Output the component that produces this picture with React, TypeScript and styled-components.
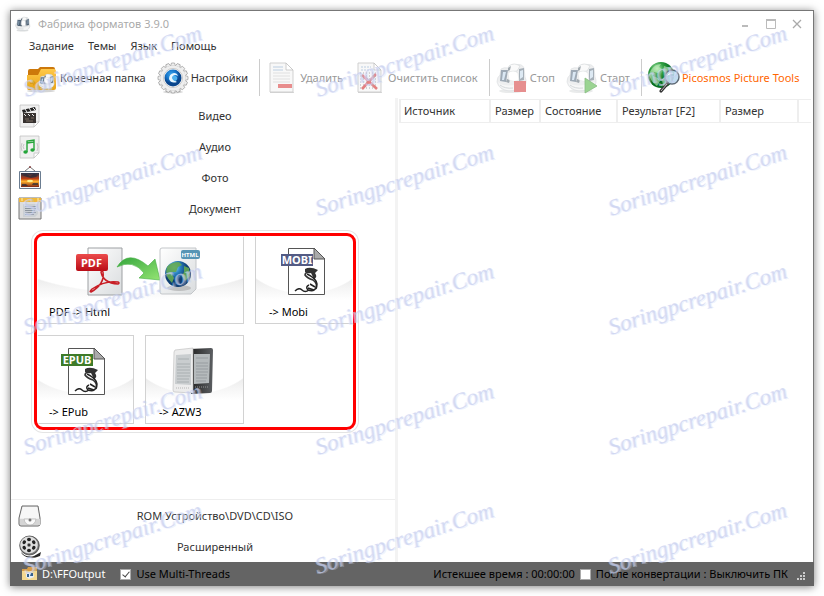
import React from "react";
import styled, { createGlobalStyle } from "styled-components";

const GlobalStyle = createGlobalStyle`
  *, *::before, *::after { box-sizing: border-box; }
  body {
    margin: 0;
    background: #fff;
    color: #333;
    font: 11px/16px "Noto Sans", "Open Sans", sans-serif;
  }
  button { font: inherit; color: inherit; background: none; border: 0; padding: 0; }
  svg { display: block; flex: none; }
`;

const Page = styled.div`
  position: relative;
  min-height: 100vh;
  padding: 10px;
  display: flex;
  overflow: hidden;
`;

const AppWindow = styled.div`
  flex: 1;
  min-width: 0;
  display: flex;
  flex-direction: column;
  background: #fff;
  border: 1px solid #777;
  border-bottom: 0;
  box-shadow: 0 1px 8px rgba(0, 0, 0, 0.5);
`;

const TitleBar = styled.header`
  display: flex;
  align-items: center;
  height: 26px;
  padding: 0 9px 0 4px;
`;

const Title = styled.h1`
  flex: 1;
  margin: 0 0 0 7px;
  font-size: 11px;
  font-weight: 400;
  color: #aaa;
`;

const WindowButtons = styled.div`
  display: flex;
  margin-right: -6px;
`;

const WindowButton = styled.button`
  display: grid;
  place-items: center;
  width: 26px;
  height: 24px;
`;

const MenuBar = styled.nav`
  display: flex;
  gap: 14px;
  height: 18px;
  align-items: center;
  padding-left: 18px;
`;

const Toolbar = styled.div`
  display: flex;
  align-items: center;
  height: 43px;
  padding: 2px 0 0 15px;
`;

const Tool = styled.button<{ $tone?: string }>`
  display: flex;
  align-items: center;
  gap: 2px;
  height: 36px;
  padding-right: 11px;
  white-space: nowrap;
  color: ${(p) => p.$tone || "#333"};
  &:disabled { color: #999; }
  &:disabled svg { opacity: 0.6; }
`;

const Separator = styled.span`
  width: 1px;
  height: 37px;
  margin-right: 6px;
  background: #ccc;
`;

const Main = styled.main`
  flex: 1;
  display: flex;
  min-height: 0;
`;

const Sidebar = styled.aside`
  flex: 0 0 384px;
  display: flex;
  flex-direction: column;
  padding-top: 2px;
`;

const Splitter = styled.div`
  flex: 0 0 3px;
  background: #f3f3f3;
`;

const Category = styled.button`
  display: flex;
  align-items: center;
  width: 100%;
  height: 31px;
  padding: 0 15px 0 7px;
  svg { width: 24px; height: 24px; }
  span { flex: 1; text-align: center; padding-left: 8px; }
`;

const Formats = styled.div`
  position: relative;
  display: grid;
  grid-template-columns: repeat(3, 99px);
  gap: 11px;
  margin: 11px 0 0 24px;
  align-self: flex-start;
  &::after {
    content: "";
    position: absolute;
    inset: -2px -2px -6px -1px;
    border: 3px solid #f00;
    border-radius: 9px;
    box-shadow: 0 0 0 2px #fff, 0 0 0 3px #e4e4e4, inset 0 0 0 1px rgba(255, 255, 255, 0.8);
    pointer-events: none;
  }
`;

const FormatCard = styled.button<{ $wide?: boolean }>`
  grid-column: ${(p) => (p.$wide ? "span 2" : "span 1")};
  height: 89px;
  display: flex;
  flex-direction: column;
  align-items: center;
  padding: 11px 4px 3px 0;
  border: 1px solid #d2d2d2;
  color: #000;
  background:
    radial-gradient(ellipse 75% 58px at 50% 0, #fff 98%, transparent 100%),
    linear-gradient(#fff 40%, #e6e6e6 42%, #f5f5f5 60%, #fff 74%);
  span { align-self: flex-start; margin: auto 0 0 13px; white-space: pre; }
`;

const SidebarFoot = styled.div`
  margin-top: auto;
  border-top: 1px solid #eee;
`;

const Queue = styled.section`
  flex: 1;
  min-width: 0;
  padding: 1px 2px 0 1px;
`;

const QueueTable = styled.table`
  width: 100%;
  table-layout: fixed;
  border-collapse: collapse;
  th {
    height: 23px;
    padding: 0 0 0 4px;
    border: 2px solid #eee;
    border-width: 1px 0 1px 2px;
    font-weight: 400;
    text-align: left;
    white-space: nowrap;
  }
  th:first-child { padding-left: 3px; }
`;

const StatusBar = styled.footer`
  display: flex;
  align-items: center;
  height: 24px;
  padding: 0 8px 0 12px;
  margin: 0 -1px;
  background: #646464;
  color: #000;
  white-space: nowrap;
`;

const OutputButton = styled.button`
  display: flex;
  align-items: center;
  gap: 4px;
  color: #fff;
`;

const CheckLabel = styled.label<{ $lead: number }>`
  display: flex;
  align-items: center;
  gap: 5px;
  margin-left: ${(p) => p.$lead}px;
`;

const Check = styled.input`
  appearance: none;
  display: grid;
  place-items: center;
  width: 11px;
  height: 11px;
  margin: 0;
  background: #fff;
  border: 1px solid #aaa;
  &:checked::after {
    content: "";
    width: 4px;
    height: 7px;
    margin-top: -2px;
    border: solid #444;
    border-width: 0 1px 1px 0;
    transform: rotate(40deg);
  }
`;

const Elapsed = styled.span`
  margin-left: auto;
`;

const Watermarks = styled.div`
  position: absolute;
  inset: 0 -53px 0 0;
  display: grid;
  grid-template-columns: repeat(3, 1fr);
  grid-template-rows: repeat(5, 1fr);
  pointer-events: none;
  user-select: none;
`;

const Watermark = styled.span`
  padding: 78px 0 0 26px;
  font: italic 400 23px/24px "Liberation Serif", serif;
  color: rgba(190, 196, 232, 0.5);
  text-shadow: 1px 1px 0 rgba(200, 212, 248, 0.3), -1px 0 0 rgba(222, 233, 255, 0.5);
  transform: rotate(-18deg);
  transform-origin: 26px 96px;
`;

const Machine = () => (
  <g>
    <ellipse cx="15" cy="29" rx="12" ry="2" fill="#c4c8ca" opacity=".6" />
    <path d="M1 20Q1 15 4 13L5 7Q8 5 12 6Q14 2 19 3Q26 1 28 6L29 15Q32 21 27 26Q22 29 13 29Q3 28 1 20Z" fill="#e3e5e7" stroke="#c3c8cb" strokeWidth=".6" />
    <path d="M2 20Q9 27 29 20Q28 26 22 28L11 28Q4 26 2 20Z" fill="#f4f5f5" />
    <path d="M5 8L12 8L10 20L4 19Z" fill="#5f7387" />
    <path d="M7 10L10 10L8 18L6 18Z" fill="#c2daee" />
    <path d="M23 7L28 6L28 18L23 19Z" fill="#6c7c8b" />
    <path d="M24 9L27 8L27 15L24 17Z" fill="#c7dcec" />
    <path d="M13 4Q18 0 24 4L21 9L13 10Z" fill="#f8f8f8" stroke="#b4babd" strokeWidth=".6" />
    <path d="M12 6L15 4L14 8L12 9ZM11 17L14 18L13 21L10 20Z" fill="#65727d" />
    <path d="M12 11Q17 7 22 11L23 18Q18 21 13 18Z" fill="#fff" stroke="#c5cacd" strokeWidth=".5" />
    <path d="M4 23Q9 27 17 26" stroke="#b9bfc3" fill="none" />
  </g>
);

const AppIcon = () => (
  <svg width="16" height="16" viewBox="0 0 32 32"><Machine /><path d="M7 9L13 8L12 20L6 20ZM21 9L27 8L27 18L21 19Z" fill="#304458" fillOpacity=".55" /></svg>
);

const FolderIcon = () => (
  <svg width="32" height="32" viewBox="0 0 32 32">
    <defs><linearGradient id="folder" x2="0" y2="1"><stop stopColor="#ffc94a" /><stop offset="1" stopColor="#e8a318" /></linearGradient></defs>
    <ellipse cx="15" cy="29" rx="14" ry="1.5" fill="#aaa" opacity=".5" />
    <path d="M2 9Q2 7 4 7H12L14 5H27Q29 5 29 7V26H2Z" fill="#cc780b" />
    <path d="M1 13H12L15 7H28Q30 7 30 9V26Q30 28 28 28H3Q1 28 1 26Z" fill="url(#folder)" />
    <path d="M4 20H7V18L10 21L7 24V22H4Z" fill="#cf930f" opacity=".6" />
    <g transform="translate(12 11) scale(.54)"><Machine /></g>
  </svg>
);

const teeth = Array.from({ length: 16 }, (_, i) => i * 22.5);
const GearIcon = () => (
  <svg width="32" height="32" viewBox="0 0 32 32">
    <defs><radialGradient id="blue" cx=".4" cy=".3"><stop stopColor="#3ca4e8" /><stop offset=".6" stopColor="#1676cb" /><stop offset="1" stopColor="#0a468d" /></radialGradient></defs>
    <ellipse cx="16" cy="30" rx="10" ry="1.5" fill="#bbb" opacity=".6" />
    {teeth.map((a) => <path key={a} d="M13.500 4L14.500 1H17.500L18.500 4Z" fill="#eee" stroke="#999" strokeWidth=".7" transform={`rotate(${a} 16 16)`} />)}
    <circle cx="16" cy="16" r="12.600" fill="#eee" />
    <circle cx="16" cy="16" r="9.500" fill="#fff" stroke="#aaa" strokeWidth=".6" />
    <circle cx="16" cy="16" r="8.500" fill="url(#blue)" />
    <path d="M20 20Q14 22 12 17Q12 12 17 11Q20 11 21 14Q18 12 16 14Q14 17 20 20Z" fill="#e7f7ff" />
    <path d="M15 15Q17 12 20 15Q21 18 18 19Q15 18 15 15Z" fill="#4fb2ee" />
  </svg>
);

const SheetBase = () => (
  <g>
    <path d="M4 30H28V31H4Z" fill="#bbb" />
    <path d="M4 1H20L27 8V30H4Z" fill="#f5f5f5" stroke="#aaa" strokeWidth=".9" />
    <path d="M20 1V8H27Z" fill="#fff" stroke="#999" strokeWidth=".8" />
  </g>
);
const RemoveIcon = () => (
  <svg width="32" height="32" viewBox="0 0 32 32"><SheetBase />
    <path d="M7 5H17M7 8H17" stroke="#91aece" /><path d="M7 11H24M7 14H24M7 17H24M7 20H24" stroke="#ccc" />
    <path d="M12 22H26V26H12Z" fill="#d94242" />
  </svg>
);
const ClearIcon = () => (
  <svg width="32" height="32" viewBox="0 0 32 32"><SheetBase />
    <path d="M7 5H17M7 8H17" stroke="#91aece" strokeDasharray="2 1" /><path d="M6 11H24M6 14H24M6 17H24M6 20H24M6 23H24M6 26H24" stroke="#777" strokeDasharray="1 2" />
    <path d="M8 13L23 27M22 12L8 27" stroke="#cf2f2f" strokeWidth="2.6" />
  </svg>
);
const StopIcon = () => (
  <svg width="32" height="32" viewBox="0 0 32 32"><Machine /><path d="M18 19H30V30H18Z" fill="#d74545" /></svg>
);
const StartIcon = () => (
  <svg width="32" height="32" viewBox="0 0 32 32"><Machine /><path d="M19 16L31 24L19 31Z" fill="#59b94b" stroke="#3b9231" strokeWidth=".8" /></svg>
);
const GlobeIcon = () => (
  <svg width="32" height="32" viewBox="0 0 32 32">
    <defs><radialGradient id="green" cx=".35" cy=".25"><stop stopColor="#b8edb5" /><stop offset=".5" stopColor="#32a044" /><stop offset="1" stopColor="#076f22" /></radialGradient></defs>
    <circle cx="13" cy="13" r="13" fill="url(#green)" />
    <path d="M3 8Q7 2 13 2L11 5L14 7L10 11L6 10L5 14L10 16L12 19L9 24Q2 19 1 12ZM16 4L22 6L24 11L19 12L15 9ZM14 17L20 14L24 16L20 23L15 24Z" fill="#c4edbe" opacity=".6" />
    <path d="M20 21L13 29" stroke="#333" strokeWidth="3.2" strokeLinecap="round" /><path d="M19 22L13 29" stroke="#bbb" strokeWidth="1" />
    <circle cx="24" cy="15" r="7" fill="#b8d7ed" fillOpacity=".88" stroke="#5d6975" strokeWidth="1.4" />
    <path d="M19 14Q21 9 26 11Q22 12 19 14Z" fill="#fff" />
  </svg>
);

const Page24 = () => <path d="M2 1H21V18L16 23H2Z M21 18H16V23" fill="#f0f0f0" stroke="#c2c2c2" strokeWidth=".8" />;
const VideoIcon = () => (
  <svg viewBox="0 0 24 24"><Page24 /><path d="M5 9H18V19H5Z" fill="#373230" /><path d="M4 6L17 3L18 6L5 9Z" fill="#222" />
    <path d="M7 5L9 8M11 4L13 7M15 4L17 6M6 10L8 12M10 10L12 12M14 10L16 12" stroke="#eee" strokeWidth="1" /><path d="M7 15H11M13 14H16M8 17H15" stroke="#8b7b6e" strokeWidth=".8" /></svg>
);
const AudioIcon = () => (
  <svg viewBox="0 0 24 24"><Page24 /><path d="M9 17V6L16 5V15M9 8L16 7" fill="none" stroke="#25a53a" strokeWidth="1.400" /><ellipse cx="7.500" cy="17" rx="2.2" ry="1.8" fill="#25a53a" /><ellipse cx="14.500" cy="15" rx="2.2" ry="1.8" fill="#25a53a" /><path d="M4 8Q2 12 4 16M19 8Q21 12 19 16M6 9Q4 12 6 14" stroke="#bbb" fill="none" strokeWidth=".8" /></svg>
);
const PhotoIcon = () => (
  <svg viewBox="0 0 24 24">
    <defs><linearGradient id="sunset" x2="0" y2="1"><stop stopColor="#26334b" /><stop offset=".4" stopColor="#ba3e16" /><stop offset=".6" stopColor="#ffb22c" /><stop offset="1" stopColor="#7e2414" /></linearGradient></defs>
    <path d="M7 5L12 1L17 5" fill="none" stroke="#555" strokeWidth=".8" /><circle cx="12" cy="1" r="1" fill="#844" />
    <path d="M1.500 5.500H22.500V22.500H1.500Z" fill="#f5f8fb" stroke="#6b7d91" /><path d="M3 7H21V21H3Z" fill="url(#sunset)" />
    <path d="M4 9L8 8L12 10L16 8L20 9L18 11L13 12L9 11ZM4 18H8L10 20H4ZM15 17H20V19H14Z" fill="#222a3b" opacity=".7" /><ellipse cx="12" cy="15" rx="3" ry="1.200" fill="#fff08a" />
  </svg>
);
const DocumentIcon = () => (
  <svg viewBox="0 0 24 24"><path d="M1 1H23V22H1Z" fill="#ddd" stroke="#777" /><path d="M1 1H23V5H1Z" fill="#f0b83c" /><path d="M4 1V4M20 1V4" stroke="#fff1ae" /><path d="M5 7H20V17L17 20H5Z" fill="#ccd0d4" /><path d="M7 9.500H18M7 11.500H18M7 13.500H17M7 15.500H18M7 17.500H16" stroke="#8d96a0" strokeWidth="1" /></svg>
);
const DriveIcon = () => (
  <svg viewBox="0 0 24 24"><path d="M4 2H20L22 14V20Q22 22 20 22H3Q1 22 1 20V14Z" fill="#eee" stroke="#666" /><path d="M5 3H19L21 14H2Z" fill="#f7f7f7" /><path d="M2 15H22V21H2Z" fill="#d5d5d5" /><path d="M6 15Q7 21 12 21Q17 21 18 15Z" fill="#fafafa" stroke="#aaa" strokeWidth=".6" /><circle cx="12" cy="16" r="1.5" fill="#777" /></svg>
);
const ReelIcon = () => (
  <svg viewBox="0 0 24 24"><path d="M3 17Q8 23 16 21L23 17L22 21Q11 26 4 19Z" fill="#282828" /><ellipse cx="11.500" cy="10.500" rx="9.800" ry="9.500" fill="#777" stroke="#333" strokeWidth=".7" /><ellipse cx="11" cy="10" rx="8.800" ry="8.400" fill="#ddd" />
    {[0, 60, 120, 180, 240, 300].map((a) => <ellipse key={a} cx="11" cy="4.500" rx="2" ry="1.700" fill="#222" transform={`rotate(${a} 11 10)`} />)}<circle cx="11" cy="10" r="2" fill="#333" stroke="#eee" strokeWidth=".6" /></svg>
);

const ArtText = styled.text`
  font: 700 11px "Noto Sans", sans-serif;
  fill: #fff;
`;

const PdfHtmlArt = () => (
  <svg width="126" height="50" viewBox="0 0 126 50">
    <defs>
      <linearGradient id="sheet" x2="1" y2="1"><stop stopColor="#fff" /><stop offset="1" stopColor="#d9dcde" /></linearGradient>
      <linearGradient id="red" x2="0" y2="1"><stop stopColor="#ec4b4b" /><stop offset="1" stopColor="#b90c16" /></linearGradient>
      <linearGradient id="arrow" x2="1" y2="1"><stop stopColor="#35a63d" /><stop offset="1" stopColor="#94e473" /></linearGradient>
      <radialGradient id="earth" cx=".35" cy=".25"><stop stopColor="#8ee3ff" /><stop offset=".5" stopColor="#287fbd" /><stop offset="1" stopColor="#0d3d72" /></radialGradient>
    </defs>
    <path d="M13 1H47V48H13Z" fill="url(#sheet)" stroke="#9da0a3" />
    <path d="M1 9Q1 7 3 7H31Q33 7 33 9V22Q33 24 31 24H3Q1 24 1 22Z" fill="url(#red)" />
    <ArtText x="6" y="20">PDF</ArtText>
    <path d="M16 45Q30 37 28 25Q27 23 26 25Q28 36 43 37Q45 36 43 35Q30 33 17 42Q14 45 16 45Z" fill="none" stroke="#c81e25" strokeWidth="1.500" />
    <path d="M42 20Q53 2 73 19L80 12L85 33L64 31L69 26Q58 12 42 20Z" fill="url(#arrow)" stroke="#45ae43" strokeWidth=".6" />
    <path d="M85 3Q85 1 87 1H121V42L116 47H87Q85 47 85 45Z" fill="url(#sheet)" stroke="#c3c6c9" />
    <rect x="106" y="3" width="19" height="9" rx="2" fill="#5795b5" /><text x="115" y="10" textAnchor="middle" fill="#fff" fontSize="6" fontWeight="700" fontFamily="Noto Sans">HTML</text>
    <ellipse cx="104" cy="41" rx="12" ry="3" fill="#999" opacity=".5" /><circle cx="103" cy="27" r="13" fill="url(#earth)" />
    <path d="M92 20Q96 15 104 15L107 18L103 20L101 25L96 25L99 31L97 36Q89 29 92 20ZM109 19L114 21L115 29L110 34L107 29L109 25Z" fill="#64a852" opacity=".9" />
  </svg>
);

const BookArt = ({ kind }: { kind: "MOBI" | "EPUB" }) => (
  <svg width="46" height="50" viewBox="0 0 46 50">
    <path d="M8.500 1.500H34L44.500 12V47.500H8.500Z" fill="#fff" stroke="#555" />
    <path d="M34 1V12H45Z" fill="#aaa" stroke="#555" />
    <rect x="1" y="7" width="32" height="12" fill={kind === "MOBI" ? "#535b84" : "#3e7b29"} />
    <ArtText x="17" y="17" textAnchor="middle">{kind}</ArtText>
    <path d="M25 22Q30 19 38 23L35 26Q38 30 34 32L31 26Q27 27 25 25Z" fill="#333" />
    <path d="M32 24Q25 25 25 28Q27 31 33 33Q38 37 36 42" fill="none" stroke="#333" strokeWidth="1.600" />
    <path d="M27 27Q36 31 37 37Q36 46 28 43Q25 40 29 38M30 37L35 40M28 41L34 43" fill="none" stroke="#222" strokeWidth="1.500" />
    <path d="M15 44Q19 40 22 43Q25 46 29 43" fill="none" stroke="#222" strokeWidth="1.400" />
  </svg>
);

const ReaderArt = () => (
  <svg width="42" height="50" viewBox="0 0 42 50">
    <defs><linearGradient id="dark"><stop stopColor="#222" /><stop offset="1" stopColor="#5c5f62" /></linearGradient></defs>
    <path d="M18 2L39 1Q41 1 41 3L40 44Q40 46 38 46L19 47Z" fill="url(#dark)" />
    <path d="M22 7H38L37 36L22 37Z" fill="#b5babc" /><path d="M24 11H36M24 16H36M24 19H36M24 22H36M24 25H36M24 28H35M24 31H35M24 34H34" stroke="#858a8d" strokeWidth=".6" />
    <path d="M3 3L21 1V46L3 45Q1 45 1 43L2 5Z" fill="#ececec" stroke="#bbb" strokeWidth=".6" /><path d="M4 8L19 7V38L3 37Z" fill="#c9cdcf" /><path d="M6 12H17M5 17H18M5 20H18M5 23H18M5 26H18M5 29H18M5 32H17M5 35H17" stroke="#959a9e" strokeWidth=".6" />
    <path d="M4 41H18M23 40H36" stroke="#aaa" strokeWidth=".8" strokeDasharray="1 1" />
  </svg>
);

const OutputIcon = () => (
  <svg width="16" height="16" viewBox="0 0 16 16"><path d="M0 3H5L6 1H15V14H0Z" fill="#d69d48" /><path d="M0 5H15V14H0Z" fill="#f4d891" /><path d="M4 8L7 6L11 7L12 11L7 13L4 11Z" fill="#e5edf6" /><path d="M5 8H7V11H5ZM9 7H11V10H8Z" fill="#34608e" /></svg>
);

const Grip = styled.svg`
  margin: 5px 0 0 9px;
`;

const menus = ["Задание", "Темы", "Язык", "Помощь"];
const categories = [
  { label: "Видео", Icon: VideoIcon },
  { label: "Аудио", Icon: AudioIcon },
  { label: "Фото", Icon: PhotoIcon },
  { label: "Документ", Icon: DocumentIcon },
];
const extras = [
  { label: "ROM Устройство\\DVD\\CD\\ISO", Icon: DriveIcon },
  { label: "Расширенный", Icon: ReelIcon },
];

export default function App() {
  return (
    <Page>
      <GlobalStyle />
      <AppWindow>
        <TitleBar>
          <AppIcon />
          <Title>Фабрика форматов 3.9.0</Title>
          <WindowButtons>
            <WindowButton aria-label="Свернуть"><svg width="10" height="10"><path d="M2 6H8V8H2Z" fill="#bbb" /></svg></WindowButton>
            <WindowButton aria-label="Развернуть"><svg width="10" height="10"><path d="M.5 1H9.500V9.500H.5Z" fill="none" stroke="#bbb" /><path d="M0 0H10V2H0Z" fill="#bbb" /></svg></WindowButton>
            <WindowButton aria-label="Закрыть"><svg width="10" height="10"><path d="M1 1L9 9M9 1L1 9" stroke="#aaa" strokeWidth="1.300" /></svg></WindowButton>
          </WindowButtons>
        </TitleBar>
        <MenuBar>{menus.map((m) => <button key={m}>{m}</button>)}</MenuBar>
        <Toolbar>
          <Tool><FolderIcon />Конечная папка</Tool>
          <Tool><GearIcon />Настройки</Tool>
          <Separator />
          <Tool disabled><RemoveIcon />Удалить</Tool>
          <Tool disabled><ClearIcon />Очистить список</Tool>
          <Separator />
          <Tool disabled><StopIcon />Стоп</Tool>
          <Tool disabled><StartIcon />Старт</Tool>
          <Separator />
          <Tool $tone="#ff6600"><GlobeIcon />Picosmos Picture Tools</Tool>
        </Toolbar>
        <Main>
          <Sidebar>
            {categories.map(({ label, Icon }) => <Category key={label}><Icon /><span>{label}</span></Category>)}
            <Formats>
              <FormatCard $wide><PdfHtmlArt /><span>{"PDF -> Html"}</span></FormatCard>
              <FormatCard><BookArt kind="MOBI" /><span>{"-> Mobi"}</span></FormatCard>
              <FormatCard><BookArt kind="EPUB" /><span>{"-> EPub"}</span></FormatCard>
              <FormatCard><ReaderArt /><span>{"-> AZW3"}</span></FormatCard>
            </Formats>
            <SidebarFoot>
              {extras.map(({ label, Icon }) => <Category key={label}><Icon /><span>{label}</span></Category>)}
            </SidebarFoot>
          </Sidebar>
          <Splitter />
          <Queue>
            <QueueTable>
              <colgroup>
                <col width="90" /><col width="50" /><col width="77" /><col width="103" /><col width="78" /><col />
              </colgroup>
              <thead>
                <tr>
                  <th>Источник</th><th>Размер</th><th>Состояние</th><th>Результат [F2]</th><th>Размер</th><th aria-label="Прочее" />
                </tr>
              </thead>
            </QueueTable>
          </Queue>
        </Main>
        <StatusBar>
          <OutputButton><OutputIcon />D:\FFOutput</OutputButton>
          <CheckLabel $lead={15}><Check type="checkbox" defaultChecked />Use Multi-Threads</CheckLabel>
          <Elapsed>Истекшее время : 00:00:00</Elapsed>
          <CheckLabel $lead={5}><Check type="checkbox" />После конвертации : Выключить ПК</CheckLabel>
          <Grip width="9" height="9" viewBox="0 0 9 9"><path d="M6 0H8V2H6ZM3 3H5V5H3ZM6 3H8V5H6ZM0 6H2V8H0ZM3 6H5V8H3ZM6 6H8V8H6Z" fill="#ccc" /></Grip>
        </StatusBar>
      </AppWindow>
      <Watermarks aria-hidden="true">
        {Array.from({ length: 15 }, (_, i) => <Watermark key={i}>Soringpcrepair.Com</Watermark>)}
      </Watermarks>
    </Page>
  );
}
